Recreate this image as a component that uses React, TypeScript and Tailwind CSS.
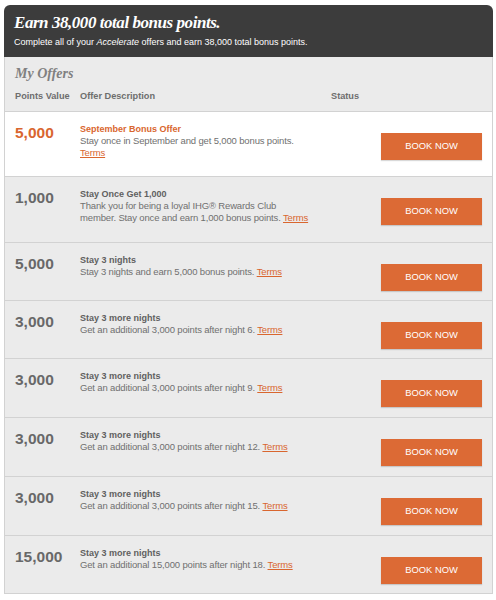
const offers = [
  {
    points: '5,000',
    title: 'September Bonus Offer',
    lines: ['Stay once in September and get 5,000 bonus points.', ''],
    featured: true,
    h: 'h-[64px]',
  },
  {
    points: '1,000',
    title: 'Stay Once Get 1,000',
    lines: ['Thank you for being a loyal IHG® Rewards Club', 'member. Stay once and earn 1,000 bonus points.'],
    h: 'h-[66px]',
  },
  { points: '5,000', title: 'Stay 3 nights', lines: ['Stay 3 nights and earn 5,000 bonus points.'], h: 'h-[58px]' },
  { points: '3,000', title: 'Stay 3 more nights', lines: ['Get an additional 3,000 points after night 6.'], h: 'h-[58px]' },
  { points: '3,000', title: 'Stay 3 more nights', lines: ['Get an additional 3,000 points after night 9.'], h: 'h-[59px]' },
  { points: '3,000', title: 'Stay 3 more nights', lines: ['Get an additional 3,000 points after night 12.'], h: 'h-[59px]' },
  { points: '3,000', title: 'Stay 3 more nights', lines: ['Get an additional 3,000 points after night 15.'], h: 'h-[59px]' },
  { points: '15,000', title: 'Stay 3 more nights', lines: ['Get an additional 15,000 points after night 18.'], h: 'h-[58px]' },
];

const sans = "font-['Liberation_Sans',Arial,sans-serif]";
const serif = "font-['Liberation_Serif',Georgia,serif]";

const App = () => {
  return (
    <div className={`min-h-screen bg-white px-[4px] pt-[5px] ${sans}`}>
      <div className="w-[489px]">
        <header className="h-[52px] rounded-t-[6px] bg-[#3c3c3c] px-[10px] pt-[8px] text-white">
          <h1 className={`${serif} text-[17px] font-bold italic leading-[19px] tracking-[-0.45px]`}>
            Earn 38,000 total bonus points.
          </h1>
          <p className="mt-[4px] text-[9px] leading-[12px]">
            Complete all of your <i>Accelerate</i> offers and earn 38,000 total bonus points.
          </p>
        </header>

        <div className="border-x border-b border-[#d2d2d2]">
          <div className="h-[55px] border-b border-[#d2d2d2] bg-[#ebebeb] px-[10px] pt-[9px]">
            <h2 className={`${serif} text-[14px] font-bold italic leading-[16px] text-[#808080]`}>My Offers</h2>
            <div className="mt-[8px] flex text-[9.2px] font-bold leading-[12px] text-[#6e6e6e]">
              <span className="w-[65px]">Points Value</span>
              <span className="w-[251px]">Offer Description</span>
              <span>Status</span>
            </div>
          </div>

          {offers.map((o, i) => (
            <div
              key={i}
              className={`flex ${o.h} ${i > 0 ? 'border-t border-[#d2d2d2]' : ''} ${
                o.featured ? 'bg-white' : 'bg-[#ebebeb]'
              } px-[10px]`}
            >
              <div
                className={`w-[65px] pt-[12px] text-[15.5px] font-bold leading-[18px] ${
                  o.featured ? 'text-[#d9662f]' : 'text-[#686868]'
                }`}
              >
                {o.points}
              </div>
              <div className="w-[250px] pt-[11px] text-[9.5px] leading-[12px] tracking-[-0.15px] text-[#707070]">
                <p className={`text-[9px] font-bold tracking-normal ${o.featured ? 'text-[#d9662f]' : 'text-[#606060]'}`}>
                  {o.title}
                </p>
                <p>
                  {o.lines.map((line, j) => (
                    <span key={j}>
                      {j > 0 && <br />}
                      {line}
                    </span>
                  ))}{' '}
                  <a href="#" className="text-[#d9662f] underline">
                    Terms
                  </a>
                </p>
              </div>
              <div className="ml-auto pt-[20px]">
                <button className="h-[27px] w-[101px] bg-[#dc6a35] text-[9.4px] text-white shadow-[0_1px_1px_rgba(0,0,0,0.15)]">
                  BOOK NOW
                </button>
              </div>
            </div>
          ))}
        </div>
      </div>
    </div>
  );
};

export default App;
